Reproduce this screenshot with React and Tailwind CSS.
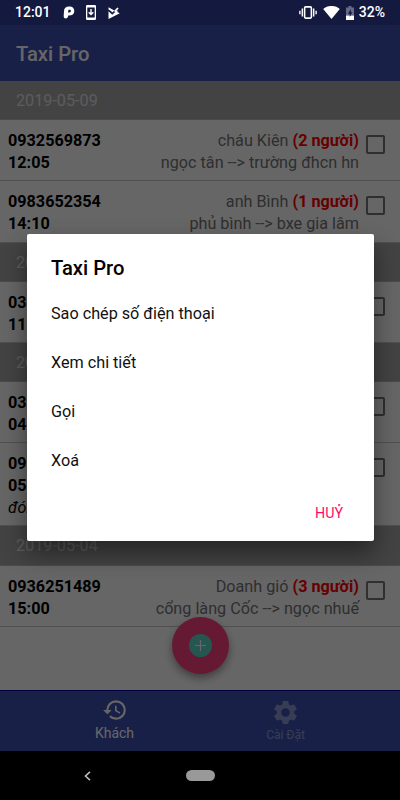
import { MdHistory, MdSettings } from "react-icons/md";

const days = [
  {
    date: "2019-05-09",
    trips: [
      { phone: "0932569873", time: "12:05", name: "cháu Kiên", seats: 2, route: "ngọc tân --> trường đhcn hn" },
      { phone: "0983652354", time: "14:10", name: "anh Bình", seats: 1, route: "phủ bình --> bxe gia lâm" },
    ],
  },
  { date: "2019-05-08", trips: [{ phone: "03", time: "11" }] },
  {
    date: "2019-05-06",
    trips: [
      { phone: "03", time: "04" },
      { phone: "09", time: "05", note: "đón" },
    ],
  },
  {
    date: "2019-05-04",
    trips: [{ phone: "0936251489", time: "15:00", name: "Doanh gió", seats: 3, route: "cổng làng Cốc --> ngọc nhuế" }],
  },
];

const actions = ["Sao chép số điện thoại", "Xem chi tiết", "Gọi", "Xoá"];

function StatusBar() {
  return (
    <div className="flex h-[25px] shrink-0 items-center bg-[#13193f] pl-[15px] pr-[15px] text-white">
      <span className="w-[49px] text-[14px] font-medium leading-[25px]">12:01</span>
      <svg className="ml-[-1px]" width="12" height="13" viewBox="0 0 12 13">
        <path fillRule="evenodd" fill="#fff" d="M1 5C1 2 3 .4 6 .4h.6c3 0 4.700 1.900 4.700 4.500 0 2.900-2 4.700-5.300 4.700H5.200C5 11.500 4.200 12.500 2.800 12.500 1.200 12.500.6 11.600.7 10ZM5.500 3.800 5 6.400h1c1.200 0 1.900-.6 1.900-1.500 0-.8-.5-1.100-1.400-1.100Z" />
      </svg>
      <svg className="ml-[11px]" width="10" height="15" viewBox="0 0 10 15">
        <path fillRule="evenodd" fill="#fff" d="M1.3 0h7.4Q10 0 10 1.3v12.4Q10 15 8.7 15H1.3Q0 15 0 13.7V1.3Q0 0 1.3 0ZM1.3 2.5v10h7.4v-10Z" />
        <path d="M5 4v5M2.7 7.2 5 9.6l2.3-2.4" fill="none" stroke="#fff" strokeWidth="1.4" />
      </svg>
      <svg className="ml-[12px]" width="12" height="12" viewBox="0 0 12 12">
        <path fill="#fff" d="M.5.3 6.300 3.600 4.400 5.500 2.600 3.800.5 2.500ZM.5 4.200 4.300 7.800 9 3.200 9.700 4.200 9.300 5 11.800 6.200.5 12Z" />
        <path d="M6.600 4.600 10 1" stroke="#fff" strokeWidth="1.8" />
      </svg>
      <svg className="ml-auto" width="18" height="13" viewBox="0 0 18 13">
        <rect x="5.6" y=".9" width="6.8" height="11.2" rx="1" fill="none" stroke="#fff" strokeWidth="1.6" />
        <path d="M3.3 2.500v8M14.700 2.500v8M.9 4.700v3.600M17.100 4.700v3.600" stroke="#fff" strokeWidth="1.4" />
      </svg>
      <svg className="ml-[6px]" width="17" height="13" viewBox="0 0 17 13">
        <path fill="#fff" d="M.2 2.900C5-1 12-1 16.800 2.900L8.500 13Z" />
      </svg>
      <svg className="ml-[6px]" width="8" height="14" viewBox="0 0 8 14">
        <path fill="#666a88" d="M2.500 0h3v1.400H8V9.500H0V1.400h2.500Z" />
        <path fill="#fff" d="M0 9.500h8V14H0Z" />
        <path fill="#13193f" d="M4.800 3 2 7.800h1.700V11l2.600-4.700H4.800Z" />
      </svg>
      <span className="ml-[5px] text-[14px] font-medium leading-[25px]">32%</span>
    </div>
  );
}

function Trip({ phone, time, name, seats, route, note }) {
  return (
    <div className={`flex shrink-0 border-b border-[#c8c8c8] pl-2 pr-[15px] pt-[10px] text-[16.2px] leading-[22px] ${note ? "h-[83px]" : "h-[61.2px]"}`}>
      <div className="font-bold text-black">
        <p>{phone}</p>
        <p>{time}</p>
        {note && <p className="font-normal italic">{note}</p>}
      </div>
      <div className="flex-1 whitespace-nowrap text-right text-[#757575]">
        {name && (
          <p>
            {name} <span className="font-bold text-[#ff0000]">({seats} người)</span>
          </p>
        )}
        <p>{route}</p>
      </div>
      <span className="ml-[7px] mt-[5px] size-[19px] rounded-[2px] border-2 border-[#757575]" />
    </div>
  );
}

function Dialog() {
  return (
    <div className="absolute inset-0 flex items-start bg-black/60 pl-[26.5px] pt-[209px]">
      <div className="flex h-[307px] w-[347px] flex-col rounded-[2px] bg-white px-[24.5px] text-black shadow-[0_12px_24px_rgba(0,0,0,0.45)]">
        <h2 className="mt-[18px] text-[20.2px] font-medium leading-[32px]">Taxi Pro</h2>
        <ul className="mt-[5px] text-[16.2px] text-[#111]">
          {actions.map((a) => (
            <li key={a} className="h-[49px] leading-[49px]">{a}</li>
          ))}
        </ul>
        <button className="mr-[6px] mt-[20px] self-end text-[14.3px] leading-[16px] text-[#ff0a68]">HUỶ</button>
      </div>
    </div>
  );
}

export default function App() {
  return (
    <div className="flex h-[800px] w-[400px] flex-col overflow-hidden bg-black font-[Roboto,sans-serif]">
      <StatusBar />

      <div className="relative flex h-[726px] shrink-0 flex-col">
        <header className="h-14 shrink-0 bg-[#3f51b5] pl-4 text-[20.2px] font-medium leading-[59px] text-white">Taxi Pro</header>

        <main className="flex h-[609px] shrink-0 flex-col bg-white">
          {days.map((day) => (
            <section key={day.date} className="flex flex-col">
              <h3 className="h-[39.2px] border-b border-[#b8b8b8] bg-[#a8a8a8] pl-4 text-[16.2px] leading-[40px] text-[#e6e6e6]">{day.date}</h3>
              {day.trips.map((trip, i) => (
                <Trip key={i} {...trip} />
              ))}
            </section>
          ))}
        </main>

        <button className="absolute left-[171.5px] top-[592px] flex size-[57px] items-center justify-center rounded-full bg-[#ff4081] shadow-[0_4px_8px_rgba(0,0,0,0.4)]">
          <svg width="23" height="23" viewBox="0 0 23 23">
            <circle cx="11.5" cy="11.5" r="11.5" fill="#5fd8c8" />
            <path d="M11.5 6v11M6 11.5h11" stroke="#fff" strokeWidth="1.2" />
          </svg>
        </button>

        <nav className="flex h-[61px] shrink-0 border-t border-[#0000a0] bg-[#3f51b5] px-[29px] text-white">
          <div className="flex flex-1 flex-col items-center pt-[6px] text-[14px] leading-[18px]">
            <MdHistory size={26} />
            <span className="mt-px">Khách</span>
          </div>
          <div className="flex flex-1 flex-col items-center pt-[7px] text-[12px] leading-[16px]">
            <MdSettings size={29} className="opacity-40" />
            <span className="opacity-40">Cài Đặt</span>
          </div>
        </nav>

        <Dialog />
      </div>

      <div className="flex flex-1 items-center">
        <svg className="ml-[84px]" width="7" height="10" viewBox="0 0 7 10">
          <path d="M6 .8 1.5 5 6 9.2" fill="none" stroke="#bdbdbd" strokeWidth="1.6" />
        </svg>
        <span className="ml-[95px] h-[11px] w-[29px] rounded-full bg-[#999]" />
      </div>
    </div>
  );
}
